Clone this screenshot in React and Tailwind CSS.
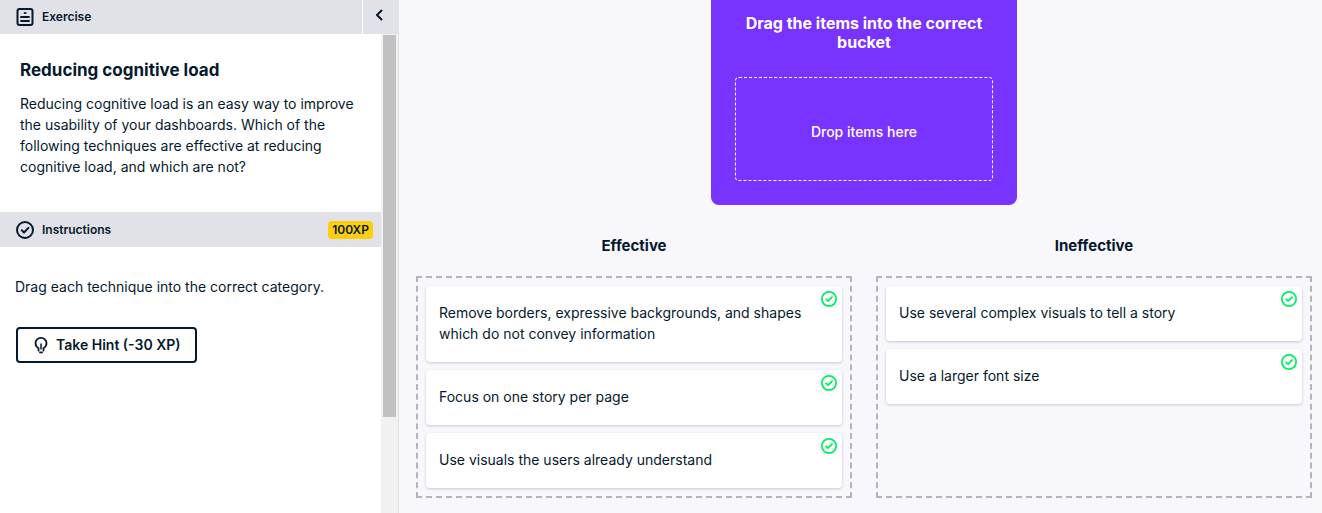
const effective = [
  "Remove borders, expressive backgrounds, and shapes which do not convey information",
  "Focus on one story per page",
  "Use visuals the users already understand",
];
const ineffective = [
  "Use several complex visuals to tell a story",
  "Use a larger font size",
];

function CheckCircle({ className }) {
  return (
    <svg viewBox="0 0 18 18" className={className} fill="none" stroke="currentColor" strokeWidth="2" aria-hidden="true">
      <circle cx="9" cy="9" r="8" />
      <path d="M5.800 9.300l2.200 2.200 4.400-4.600" strokeLinecap="round" strokeLinejoin="round" />
    </svg>
  );
}

function ExerciseIcon() {
  return (
    <svg viewBox="0 0 18 18" className="size-[18px]" fill="none" stroke="currentColor" strokeWidth="2" aria-hidden="true">
      <rect x="1.500" y="1" width="15" height="16" rx="2" />
      <path d="M5 9h8M5 13h8" strokeWidth="1.800" strokeLinecap="round" />
      <path d="M7.800 5h2.600" strokeWidth="1.800" />
    </svg>
  );
}

function BulbIcon() {
  return (
    <svg viewBox="0 0 14 18" className="h-[18px] w-3.5" fill="none" stroke="currentColor" strokeWidth="1.800" aria-hidden="true">
      <path d="M4.500 14.500V12.200C2.700 11.200 1.500 9.400 1.500 7.300a5.500 5.500 0 0 1 11 0c0 2.100-1.200 3.900-3 4.900v2.300" strokeLinecap="round" />
      <path d="M7 7.500v6" strokeWidth="1.500" />
      <path d="M5.200 16.400h3.600" strokeWidth="1.800" />
    </svg>
  );
}

function Bucket({ title, items }) {
  return (
    <section className="flex min-w-0 flex-1 flex-col">
      <h3 className="text-center text-[15px] leading-5 font-bold">{title}</h3>
      <ul className="mt-5 flex flex-1 flex-col gap-2 border-2 border-dashed border-[#b0b5c0] p-2">
        {items.map((item) => (
          <li key={item} className="relative rounded bg-white pt-4 pr-10 pb-[18px] pl-[13px] text-sm leading-[21px] shadow-[0_1px_3px_rgba(5,25,45,0.2)]">
            {item}
            <CheckCircle className="absolute top-[5px] right-[5px] size-4 text-[#03ef62]" />
          </li>
        ))}
      </ul>
    </section>
  );
}

export default function App() {
  return (
    <div className="flex min-h-screen bg-[#f7f7fc] font-['Inter','Liberation_Sans',sans-serif] text-[#05192d]">
      <aside className="flex w-[399px] shrink-0 flex-col border-r border-[#e1e2e8] bg-white">
        <header className="flex h-[34px] bg-[#e1e2e7]">
          <h2 className="flex flex-1 items-center gap-2 pl-4 text-xs font-semibold">
            <ExerciseIcon />
            Exercise
          </h2>
          <button type="button" aria-label="Collapse panel" className="flex w-9 items-center justify-center border-l border-white pr-1 pb-1">
            <svg viewBox="0 0 8 12" className="h-3 w-2" fill="none" stroke="currentColor" strokeWidth="2" aria-hidden="true">
              <path d="M6.500 1.500L2 6l4.500 4.500" strokeLinecap="round" strokeLinejoin="round" />
            </svg>
          </button>
        </header>
        <div className="flex flex-1">
          <div className="min-w-0 flex-1">
            <div className="px-5 pt-6 pb-[35px]">
              <h1 className="text-[17px] leading-6 font-bold">Reducing cognitive load</h1>
              <p className="mt-[11px] text-sm leading-[21px]">
                Reducing cognitive load is an easy way to improve the usability of your dashboards. Which of the following techniques are effective at reducing cognitive load, and which are not?
              </p>
            </div>
            <div className="flex h-[35px] items-center justify-between bg-[#e1e2e7] pr-2 pl-4">
              <h2 className="flex items-center gap-2 text-xs font-semibold">
                <CheckCircle className="size-[18px]" />
                Instructions
              </h2>
              <strong className="rounded bg-[#fcce0d] px-1 text-xs leading-[18px] font-semibold">100XP</strong>
            </div>
            <div className="px-[15px] pt-[29px]">
              <p className="text-sm leading-[21px]">Drag each technique into the correct category.</p>
              <button type="button" className="mx-px mt-[30px] flex h-9 items-center gap-2 rounded border-2 border-[#05192d] pr-3.5 pl-4 text-sm leading-5 font-semibold">
                <BulbIcon />
                Take Hint (-30 XP)
              </button>
            </div>
          </div>
          <div className="flex w-[17px] flex-col bg-[#f1f1f1] px-0.5 pt-px">
            <div className="h-4/5 bg-[#c1c1c1]" />
          </div>
        </div>
      </aside>
      <main className="flex min-w-0 flex-1 flex-col pr-2.5 pb-[15px] pl-[17px]">
        <section className="mx-auto w-[306px] rounded-b-lg bg-[#7933ff] px-6 pt-3.5 pb-6 text-center text-white">
          <h2 className="text-base leading-[19px] font-bold">Drag the items into the correct bucket</h2>
          <div className="mt-[25px] flex h-[104px] items-center justify-center rounded border border-dashed border-white pt-1.5 text-sm font-medium">
            Drop items here
          </div>
        </section>
        <div className="mt-[31px] flex flex-1 gap-6">
          <Bucket title="Effective" items={effective} />
          <Bucket title="Ineffective" items={ineffective} />
        </div>
      </main>
    </div>
  );
}
